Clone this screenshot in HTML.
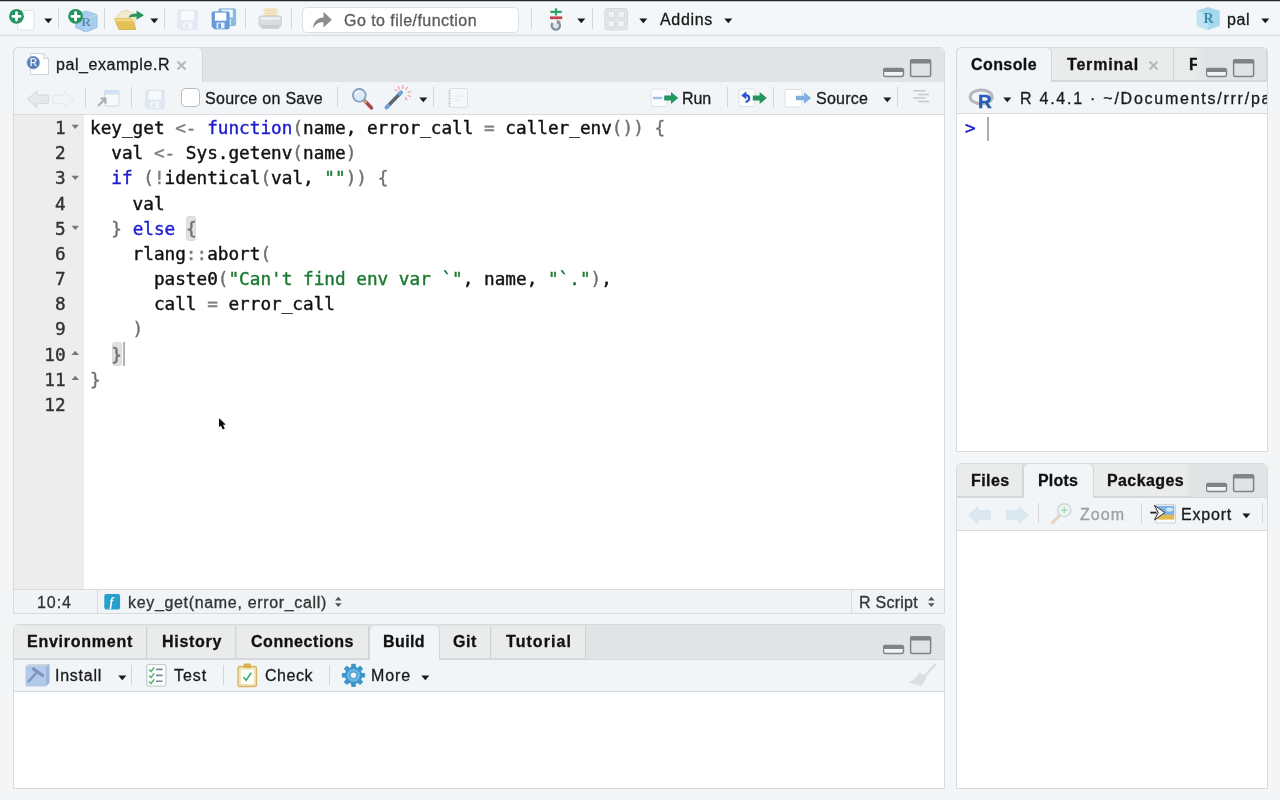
<!DOCTYPE html>
<html><head><meta charset="utf-8"><title>RStudio</title>
<style>
*{box-sizing:border-box;margin:0;padding:0}
html,body{width:1280px;height:800px;overflow:hidden;background:#f4f5f7}
body{filter:blur(0.4px);background:#f4f5f7;font-family:"Liberation Sans",sans-serif;font-size:16px;color:#1a1a1a;position:relative}
.abs{position:absolute}
svg{display:block}
.t{-webkit-text-stroke:0.3px;position:absolute;white-space:pre;line-height:20px}
.sep{position:absolute;width:1px;background:#d3d6d8}
.code{-webkit-text-stroke:0.42px;font-family:"DejaVu Sans Mono","Liberation Mono",monospace;font-size:17.69px;white-space:pre;position:absolute;line-height:25.18px;height:25.18px}
</style></head><body>
<div class="abs" style="left:0px;top:0px;width:1280px;height:35px;background:#f4f7f9;"></div>
<div class="abs" style="left:0px;top:34px;width:1280px;height:1px;background:#e6e8ea;"></div>
<div class="abs" style="left:0px;top:35px;width:1280px;height:1px;background:#dfe2e3;"></div>
<div class="abs" style="left:0px;top:36px;width:1280px;height:1px;background:#eceef0;"></div>
<div class="abs" style="left:0px;top:0px;width:1280px;height:1px;background:#23262a;"></div>
<div class="abs" style="left:0px;top:1px;width:1280px;height:1px;background:rgba(35,38,42,0.25);"></div>
<svg class="abs" style="left:8px;top:6px" width="30" height="27" viewBox="8 6 30 27"><rect x="17.5" y="10.5" width="16.5" height="19.5" rx="1" fill="#fdfeff" stroke="#dfe3e6" stroke-width="1"/><circle cx="16.5" cy="16.3" r="7.4" fill="#24955c"/><path d="M16.5 12.6 V20 M12.8 16.3 H20.2" stroke="#fff" stroke-width="2.8" stroke-linecap="round"/></svg>
<svg class="abs" style="left:44px;top:17.9px" width="9" height="6" viewBox="0 0 9 6"><path d="M0.3 0.6 L8.3 0.6 L4.3 5.2 Z" fill="#1a1a1a"/></svg>
<div class="sep" style="left:58px;top:8px;height:21px"></div>
<svg class="abs" style="left:66px;top:5px" width="34" height="30" viewBox="66 5 34 30"><path d="M86 11 L97 14.5 L97 27.5 L86 32 L75.5 27.5 L75.5 14.5 Z" fill="#a9cdec" stroke="#8fbbe2" stroke-width="0.8"/><path d="M86 19 L97 14.5 M86 19 L75.5 14.5 M86 19 V32" stroke="#c4def3" stroke-width="0.8" fill="none"/><text x="81.5" y="25.5" font-family="Liberation Serif,serif" font-weight="bold" font-size="13" fill="#5b8db4">R</text><circle cx="75.6" cy="16.3" r="7.4" fill="#24955c"/><path d="M75.6 12.6 V20 M71.9 16.3 H79.3" stroke="#fff" stroke-width="2.8" stroke-linecap="round"/></svg>
<div class="sep" style="left:104px;top:8px;height:21px"></div>
<svg class="abs" style="left:112px;top:6px" width="34" height="27" viewBox="112 6 34 27"><path d="M117 16 L121 11.5 L128 10.5 L131 13 L135 13 L135 26 L117 26 Z" fill="#f4ead0" stroke="#e2cf9a" stroke-width="0.8"/><path d="M114.5 18.5 L131.5 18.5 L136 29.5 L119 29.5 Z" fill="#e3c155" stroke="#d4ae3c" stroke-width="0.8"/><path d="M114.5 18.5 L131.5 18.5 L132.8 21.5 L115.7 21.5 Z" fill="#f0d77f"/><path d="M128.5 17.5 C129.5 14.5 132.5 13.6 136.5 13.8 L136.5 10.6 L144 15.2 L136.5 19.8 L136.5 16.8 C133.5 16.6 131 16.8 128.5 17.5 Z" fill="#24955c"/></svg>
<svg class="abs" style="left:149.5px;top:17.9px" width="9" height="6" viewBox="0 0 9 6"><path d="M0.3 0.6 L8.3 0.6 L4.3 5.2 Z" fill="#1a1a1a"/></svg>
<div class="sep" style="left:164px;top:8px;height:21px"></div>
<svg class="abs" style="left:176px;top:8px" width="24" height="24" viewBox="176 8 24 24"><path d="M177.8 11.399999999999999 Q177.8 10.2 179.0 10.2 L196.20000000000002 10.2 Q197.4 10.2 197.4 11.399999999999999 L197.4 28.6 Q197.4 29.8 196.20000000000002 29.8 L180.3 29.8 L177.8 27.3 Z" fill="#e2eaf3" stroke="#dbe2ea" stroke-width="0.6"/><rect x="181.1" y="11.0" width="12.9" height="9.2" fill="#f8fafc"/><rect x="183.1" y="22.4" width="9.0" height="6.8" fill="#f4f7fa"/><rect x="184.9" y="23.5" width="3.3" height="5.1" fill="#e2eaf3"/></svg>
<svg class="abs" style="left:210px;top:7px" width="28" height="25" viewBox="210 7 28 25"><path d="M218.8 10.0 Q218.8 8.8 220.0 8.8 L234.40000000000003 8.8 Q235.60000000000002 8.8 235.60000000000002 10.0 L235.60000000000002 24.400000000000002 Q235.60000000000002 25.6 234.40000000000003 25.6 L221.3 25.6 L218.8 23.1 Z" fill="#84bde0" stroke="#6aa6d6" stroke-width="0.6"/><rect x="221.7" y="9.6" width="11.1" height="7.9" fill="#f2f8fc"/><rect x="223.3" y="19.2" width="7.7" height="5.8" fill="#dbeaf6"/><rect x="224.8" y="20.2" width="2.9" height="4.4" fill="#84bde0"/><path d="M212 13.0 Q212 11.8 213.2 11.8 L228.0 11.8 Q229.2 11.8 229.2 13.0 L229.2 27.8 Q229.2 29.0 228.0 29.0 L214.5 29.0 L212 26.5 Z" fill="#679cd8" stroke="#5a8fcc" stroke-width="0.6"/><rect x="214.9" y="12.6" width="11.4" height="8.1" fill="#ffffff"/><rect x="216.6" y="22.5" width="7.9" height="5.9" fill="#e9f1fa"/><rect x="218.2" y="23.5" width="2.9" height="4.5" fill="#679cd8"/></svg>
<div class="sep" style="left:245px;top:8px;height:21px"></div>
<svg class="abs" style="left:256px;top:6px" width="28" height="25" viewBox="256 6 28 25"><rect x="263.5" y="8" width="14" height="10" fill="#f5e7c6"/><path d="M265 10.5 H276 M265 13 H276 M265 15.5 H276" stroke="#ecd9ae" stroke-width="1"/><rect x="259" y="16" width="22.5" height="10.5" rx="2.5" fill="#d9dde0" stroke="#c3c8cc" stroke-width="0.8"/><rect x="261" y="17.2" width="18.5" height="2.6" fill="#eceff1"/><rect x="261" y="25" width="18.5" height="3.8" rx="1" fill="#c9ced2"/></svg>
<div class="sep" style="left:291px;top:8px;height:21px"></div>
<div class="abs" style="left:301.5px;top:6.5px;width:217.5px;height:26px;background:#fff;border:1.5px solid #dcdfe1;border-radius:4.5px"></div>
<svg class="abs" style="left:311px;top:9px" width="23" height="22" viewBox="311 9 23 22"><path d="M313 28.5 C313.5 21.5 317.5 17.8 323.5 17.6 L323.5 11.8 L331.8 19.8 L323.5 27.6 L323.5 22.2 C319 22 315.5 23.8 313 28.5 Z" fill="#8c8c8c"/></svg>
<span class="t" style="left:344.0px;top:10.7px;color:#5c5c5c;letter-spacing:0.45px;">Go to file/function</span>
<div class="sep" style="left:531px;top:8px;height:21px"></div>
<svg class="abs" style="left:546px;top:5px" width="20" height="28" viewBox="546 5 20 28"><path d="M556 8.2 V15.4 M550.4 11.8 H561.8" stroke="#2aa766" stroke-width="2.2"/><rect x="550" y="16.4" width="12.2" height="2.8" fill="#c9414a"/><circle cx="555.7" cy="25.7" r="3.4" fill="#dbe8f4"/><path d="M558.6 22.5 A4.1 4.1 0 1 1 552.6 23" fill="none" stroke="#858c92" stroke-width="2.3"/><path d="M556.6 19.6 L561 21.8 L557.2 24.6 Z" fill="#8d9499"/></svg>
<svg class="abs" style="left:577.3px;top:17.9px" width="9" height="6" viewBox="0 0 9 6"><path d="M0.3 0.6 L8.3 0.6 L4.3 5.2 Z" fill="#1a1a1a"/></svg>
<div class="sep" style="left:592px;top:8px;height:21px"></div>
<svg class="abs" style="left:603px;top:7px" width="27" height="25" viewBox="603 7 27 25"><rect x="605" y="8.6" width="22.4" height="21.2" rx="2.5" fill="#e4e7e9" stroke="#d3d7da" stroke-width="1"/><rect x="608" y="11.2" width="6.6" height="6.6" rx="1" fill="#f1f3f5" stroke="#d0d4d7" stroke-width="0.9"/><rect x="617.8" y="11.2" width="6.6" height="6.6" rx="1" fill="#f1f3f5" stroke="#d0d4d7" stroke-width="0.9"/><rect x="608" y="20.6" width="6.6" height="6.6" rx="1" fill="#f1f3f5" stroke="#d0d4d7" stroke-width="0.9"/><rect x="617.8" y="20.6" width="6.6" height="6.6" rx="1" fill="#f1f3f5" stroke="#d0d4d7" stroke-width="0.9"/></svg>
<svg class="abs" style="left:638.5px;top:17.9px" width="9" height="6" viewBox="0 0 9 6"><path d="M0.3 0.6 L8.3 0.6 L4.3 5.2 Z" fill="#1a1a1a"/></svg>
<span class="t" style="left:660.0px;top:10.0px;color:#1a1a1a;letter-spacing:0.68px;">Addins</span>
<svg class="abs" style="left:724px;top:17.9px" width="9" height="6" viewBox="0 0 9 6"><path d="M0.3 0.6 L8.3 0.6 L4.3 5.2 Z" fill="#1a1a1a"/></svg>
<svg class="abs" style="left:1195px;top:6px" width="27" height="26" viewBox="1195 6 27 26"><path d="M1208 7.6 L1219.3 11 L1219.3 25.5 L1208 29.7 L1197 25.5 L1197 11 Z" fill="#a6d8ee" stroke="#9bd0ea" stroke-width="0.6"/><path d="M1197 11 L1208 14.8 L1208 29.7 L1197 25.5 Z" fill="#c2e3f4"/><text x="1203.6" y="23" font-family="Liberation Serif,serif" font-weight="bold" font-size="14" fill="#3a8ea9">R</text></svg>
<span class="t" style="left:1227.0px;top:10.0px;color:#1a1a1a;letter-spacing:0.55px;">pal</span>
<svg class="abs" style="left:1260.7px;top:17.9px" width="9" height="6" viewBox="0 0 9 6"><path d="M0.3 0.6 L8.3 0.6 L4.3 5.2 Z" fill="#1a1a1a"/></svg>
<div class="abs" style="left:13px;top:47px;width:932px;height:567px;background:#fff;border:1px solid #d8dbdd;border-radius:5px 5px 0 0"></div>
<div class="abs" style="left:14px;top:48px;width:930px;height:34px;background:#e1e4e5;border-radius:5px 5px 0 0"></div>
<div class="abs" style="left:14px;top:48px;width:188px;height:35px;background:#f2f5f8;border-radius:5px 5px 0 0;box-shadow:1px 0 0 #d4d8da,-1px 0 0 #d4d8da"></div>
<div class="abs" style="left:14px;top:82px;width:930px;height:32px;background:#f2f5f8;"></div>
<div class="abs" style="left:14px;top:114px;width:930px;height:1px;background:#d9dcde;"></div>
<svg class="abs" style="left:26px;top:51px" width="25" height="26" viewBox="26 51 25 26"><path d="M30.5 53.5 L43.5 53.5 L48.5 58.5 L48.5 74.5 L30.5 74.5 Z" fill="#fff" stroke="#cfd3d6" stroke-width="1"/><path d="M43.5 53.5 L43.5 58.5 L48.5 58.5" fill="#f0f2f3" stroke="#cfd3d6" stroke-width="0.9"/><circle cx="33.3" cy="62.6" r="6.3" fill="#557cb6" stroke="#86a3d0" stroke-width="0.8"/><text x="29.8" y="66.2" font-family="Liberation Sans,sans-serif" font-weight="bold" font-size="10" fill="#dde6f3">R</text></svg>
<span class="t" style="left:56.0px;top:55.1px;color:#1a1a1a;letter-spacing:0.56px;">pal_example.R</span>
<svg class="abs" style="left:176px;top:60px" width="11" height="11" viewBox="0 0 11 11"><path d="M1.5 1.5 L9.5 9.5 M9.5 1.5 L1.5 9.5" stroke="#b4b9bc" stroke-width="2.2" fill="none"/></svg>
<svg class="abs" style="left:883px;top:58.6px" width="50" height="19" viewBox="0 0 50 19"><rect x="0.5" y="9.5" width="20" height="8" rx="2" fill="#f2f3f4" stroke="#7d8386" stroke-width="1.4"/><rect x="0.5" y="9" width="20" height="4" rx="1.5" fill="#7d8386"/><rect x="27.6" y="1" width="20" height="16.4" rx="1.5" fill="#e0e3e4" stroke="#7d8386" stroke-width="1.5"/><rect x="27" y="0.3" width="21.2" height="4.2" rx="1.5" fill="#7d8386"/></svg>
<svg class="abs" style="left:26px;top:88px" width="24" height="22" viewBox="26 88 24 22"><path d="M27.5 99.3 L37 90.8 L37 95 L48.3 95 L48.3 103.6 L37 103.6 L37 107.8 Z" fill="#e6e8ea" stroke="#d4d7d9" stroke-width="1"/></svg>
<svg class="abs" style="left:51px;top:88px" width="24" height="22" viewBox="51 88 24 22"><path d="M73.6 99.3 L64.2 90.8 L64.2 95 L53 95 L53 103.6 L64.2 103.6 L64.2 107.8 Z" fill="#f1f3f5" stroke="#e4e7e9" stroke-width="1"/></svg>
<div class="sep" style="left:85px;top:87px;height:20px"></div>
<svg class="abs" style="left:96px;top:88px" width="25" height="22" viewBox="96 88 25 22"><rect x="104.5" y="90.5" width="14.5" height="15.5" rx="1.5" fill="#f6f8fa" stroke="#d2d6d9" stroke-width="1"/><rect x="104.5" y="90.5" width="14.5" height="4" rx="1.5" fill="#cfe1f3"/><path d="M98 106 L104.5 99.5 M100.5 98.5 L105.5 98.5 L105.5 103.5" stroke="#a9adb0" stroke-width="2" fill="none"/></svg>
<div class="sep" style="left:131px;top:87px;height:20px"></div>
<svg class="abs" style="left:144px;top:88px" width="22" height="22" viewBox="144 88 22 22"><path d="M145.6 91.4 Q145.6 90.2 146.79999999999998 90.2 L163.0 90.2 Q164.2 90.2 164.2 91.4 L164.2 107.60000000000001 Q164.2 108.80000000000001 163.0 108.80000000000001 L148.1 108.80000000000001 L145.6 106.30000000000001 Z" fill="#dfe8f2" stroke="#d5dde6" stroke-width="0.6"/><rect x="148.8" y="91.0" width="12.3" height="8.7" fill="#f7f9fb"/><rect x="150.6" y="101.7" width="8.6" height="6.5" fill="#f4f7fa"/><rect x="152.3" y="102.8" width="3.2" height="4.8" fill="#dfe8f2"/></svg>
<div class="abs" style="left:181px;top:88px;width:19px;height:19px;background:#fff;border:1.7px solid #b9bcbe;border-radius:4.5px"></div>
<span class="t" style="left:205.0px;top:88.9px;color:#1a1a1a;letter-spacing:0.30px;">Source on Save</span>
<div class="sep" style="left:337px;top:87px;height:20px"></div>
<svg class="abs" style="left:350px;top:86px" width="24" height="25" viewBox="350 86 24 25"><path d="M365 101 L371.5 108" stroke="#a8474a" stroke-width="3.4" stroke-linecap="round"/><path d="M363.5 99.5 L366.5 102.8" stroke="#c9a464" stroke-width="3"/><circle cx="359.3" cy="95.3" r="6.4" fill="#dcebf8" stroke="#7d9cc0" stroke-width="1.6"/><path d="M355.5 94 A4.2 4.2 0 0 1 359 91.3" stroke="#fff" stroke-width="1.4" fill="none"/></svg>
<svg class="abs" style="left:383px;top:84px" width="31" height="27" viewBox="383 84 31 27"><path d="M386.5 107.5 L401 92.5" stroke="#5c6770" stroke-width="3.6" stroke-linecap="round"/><path d="M386.5 107.5 L388.2 105.7" stroke="#6aa6e0" stroke-width="3.6" stroke-linecap="round"/><path d="M399.6 93.9 L401 92.5" stroke="#6aa6e0" stroke-width="3.6" stroke-linecap="round"/><path d="M403 85.5 L402.5 89 M398 86.5 L399.5 89.5 M394.5 89.5 L397.5 91 M407.5 87 L405.5 90 M411 91.5 L407.5 92.5 M411 96.5 L407.5 95.5 M407 100 L405 97.5" stroke="#ee9a98" stroke-width="1.3" fill="none"/></svg>
<svg class="abs" style="left:419.4px;top:97.3px" width="9" height="6" viewBox="0 0 9 6"><path d="M0.3 0.6 L8.3 0.6 L4.3 5.2 Z" fill="#1a1a1a"/></svg>
<div class="sep" style="left:433px;top:87px;height:20px"></div>
<svg class="abs" style="left:446px;top:87px" width="24" height="23" viewBox="446 87 24 23"><rect x="449.5" y="88.5" width="18" height="19" rx="2" fill="#f6f7f8" stroke="#dcdfe1" stroke-width="1"/><path d="M448.3 91 H451 M448.3 93.5 H451 M448.3 96 H451 M448.3 98.5 H451 M448.3 101 H451 M448.3 103.5 H451 M448.3 106 H451" stroke="#c9cdd0" stroke-width="1"/><path d="M455 96 H464 M455 100 H461" stroke="#e4e9f0" stroke-width="1"/></svg>
<svg class="abs" style="left:649px;top:87px" width="31" height="22" viewBox="649 87 31 22"><rect x="651" y="89" width="16" height="17.5" rx="2" fill="#fbfcfd" stroke="#dfe2e4" stroke-width="1"/><rect x="653" y="96.8" width="9.5" height="2.4" fill="#9cc3ee"/><path d="M664.2 95.6 L671 95.6 L671 92 L678.2 98 L671 104 L671 100.4 L664.2 100.4 Z" fill="#24955c"/></svg>
<span class="t" style="left:682.0px;top:88.9px;color:#1a1a1a;letter-spacing:-0.12px;">Run</span>
<div class="sep" style="left:727px;top:87px;height:20px"></div>
<svg class="abs" style="left:737px;top:87px" width="32" height="22" viewBox="737 87 32 22"><rect x="739" y="89" width="16" height="17.5" rx="2" fill="#fbfcfd" stroke="#dfe2e4" stroke-width="1"/><path d="M745.5 102 C750.5 101 750.5 95 745 95.2" stroke="#2f55d4" stroke-width="2.2" fill="none"/><path d="M746.3 91.3 L741.2 95.4 L746.3 99.2 Z" fill="#2f55d4"/><path d="M752.8 95.6 L759.6 95.6 L759.6 92 L766.8 98 L759.6 104 L759.6 100.4 L752.8 100.4 Z" fill="#24955c"/></svg>
<div class="sep" style="left:773px;top:87px;height:20px"></div>
<svg class="abs" style="left:783px;top:87px" width="30" height="22" viewBox="783 87 30 22"><rect x="785" y="89.5" width="17" height="17.5" rx="1.5" fill="#ffffff" stroke="#dcdfe1" stroke-width="1"/><path d="M796 95.8 L804 95.8 L804 92.2 L811.2 98 L804 103.8 L804 100.2 L796 100.2 Z" fill="#7fb0df"/></svg>
<span class="t" style="left:816.0px;top:88.9px;color:#1a1a1a;letter-spacing:0.22px;">Source</span>
<svg class="abs" style="left:882.6px;top:97.2px" width="9" height="6" viewBox="0 0 9 6"><path d="M0.3 0.6 L8.3 0.6 L4.3 5.2 Z" fill="#1a1a1a"/></svg>
<div class="sep" style="left:897px;top:87px;height:20px"></div>
<svg class="abs" style="left:910px;top:88px" width="21" height="17" viewBox="910 88 21 17"><path d="M913 90.8 H925.5 M918 94.4 H929 M913 98 H925.5 M918 101.6 H929" stroke="#c5c9cc" stroke-width="1.5"/></svg>
<div class="abs" style="left:14px;top:115px;width:70px;height:474px;background:#ededed;"></div>
<div class="abs" style="left:186.2px;top:216.2px;width:10.1px;height:24.4px;background:#e1e1e1;border:1px solid #dadada;border-radius:2.5px"></div>
<div class="abs" style="left:111.6px;top:342.1px;width:10.1px;height:24.4px;background:#e1e1e1;border:1px solid #dadada;border-radius:2.5px"></div>
<div class="code" style="left:14px;width:51.6px;top:116.00px;text-align:right;color:#333">1</div>
<svg class="abs" style="left:71px;top:124.3px" width="9" height="6" viewBox="0 0 9 6"><path d="M0.5 0.8 L8 0.8 L4.25 5 Z" fill="#777"/></svg>
<div class="code" style="left:90.0px;top:116.00px;color:#111">key_get <span style="color:#7c8084">&lt;-</span> <span style="color:#1c1cd0">function</span><span style="color:#6e726f">(</span>name, error_call <span style="color:#7c8084">=</span> caller_env<span style="color:#6e726f">())</span> <span style="color:#6e726f">{</span></div>
<div class="code" style="left:14px;width:51.6px;top:141.18px;text-align:right;color:#333">2</div>
<div class="code" style="left:90.0px;top:141.18px;color:#111">  val <span style="color:#7c8084">&lt;-</span> Sys.getenv<span style="color:#6e726f">(</span>name<span style="color:#6e726f">)</span></div>
<div class="code" style="left:14px;width:51.6px;top:166.36px;text-align:right;color:#333">3</div>
<svg class="abs" style="left:71px;top:174.7px" width="9" height="6" viewBox="0 0 9 6"><path d="M0.5 0.8 L8 0.8 L4.25 5 Z" fill="#777"/></svg>
<div class="code" style="left:90.0px;top:166.36px;color:#111">  <span style="color:#1c1cd0">if</span> <span style="color:#6e726f">(</span><span style="color:#7c8084">!</span>identical<span style="color:#6e726f">(</span>val, <span style="color:#1a7a31">&quot;&quot;</span><span style="color:#6e726f">))</span> <span style="color:#6e726f">{</span></div>
<div class="code" style="left:14px;width:51.6px;top:191.54px;text-align:right;color:#333">4</div>
<div class="code" style="left:90.0px;top:191.54px;color:#111">    val</div>
<div class="code" style="left:14px;width:51.6px;top:216.72px;text-align:right;color:#333">5</div>
<svg class="abs" style="left:71px;top:225.0px" width="9" height="6" viewBox="0 0 9 6"><path d="M0.5 0.8 L8 0.8 L4.25 5 Z" fill="#777"/></svg>
<div class="code" style="left:90.0px;top:216.72px;color:#111">  <span style="color:#6e726f">}</span> <span style="color:#1c1cd0">else</span> <span style="color:#6e726f">{</span></div>
<div class="code" style="left:14px;width:51.6px;top:241.90px;text-align:right;color:#333">6</div>
<div class="code" style="left:90.0px;top:241.90px;color:#111">    rlang<span style="color:#7c8084">::</span>abort<span style="color:#6e726f">(</span></div>
<div class="code" style="left:14px;width:51.6px;top:267.08px;text-align:right;color:#333">7</div>
<div class="code" style="left:90.0px;top:267.08px;color:#111">      paste0<span style="color:#6e726f">(</span><span style="color:#1a7a31">&quot;Can&#x27;t find env var `&quot;</span>, name, <span style="color:#1a7a31">&quot;`.&quot;</span><span style="color:#6e726f">)</span>,</div>
<div class="code" style="left:14px;width:51.6px;top:292.26px;text-align:right;color:#333">8</div>
<div class="code" style="left:90.0px;top:292.26px;color:#111">      call <span style="color:#7c8084">=</span> error_call</div>
<div class="code" style="left:14px;width:51.6px;top:317.44px;text-align:right;color:#333">9</div>
<div class="code" style="left:90.0px;top:317.44px;color:#111">    <span style="color:#6e726f">)</span></div>
<div class="code" style="left:14px;width:51.6px;top:342.62px;text-align:right;color:#333">10</div>
<svg class="abs" style="left:71px;top:349.6px" width="9" height="6" viewBox="0 0 9 6"><path d="M0.5 5 L8 5 L4.25 0.8 Z" fill="#777"/></svg>
<div class="code" style="left:90.0px;top:342.62px;color:#111">  <span style="color:#6e726f">}</span></div>
<div class="code" style="left:14px;width:51.6px;top:367.80px;text-align:right;color:#333">11</div>
<svg class="abs" style="left:71px;top:374.8px" width="9" height="6" viewBox="0 0 9 6"><path d="M0.5 5 L8 5 L4.25 0.8 Z" fill="#777"/></svg>
<div class="code" style="left:90.0px;top:367.80px;color:#111"><span style="color:#6e726f">}</span></div>
<div class="code" style="left:14px;width:51.6px;top:392.98px;text-align:right;color:#333">12</div>
<div class="abs" style="left:123px;top:342px;width:2px;height:24px;background:#b2b2b2;"></div>
<svg class="abs" style="left:216px;top:416px" width="12" height="16" viewBox="216 416 12 16"><path d="M219.2 418.6 L219.2 426.8 L221 425.2 L222.9 429.2 L224.5 428.5 L222.7 424.6 L225.4 424.4 Z" fill="#0a0a0a" stroke="rgba(120,120,120,0.25)" stroke-width="1.2"/><path d="M219.2 418.6 L219.2 426.8 L221 425.2 L222.9 429.2 L224.5 428.5 L222.7 424.6 L225.4 424.4 Z" fill="#0a0a0a"/></svg>
<div class="abs" style="left:14px;top:589px;width:930px;height:1px;background:#d9dcde;"></div>
<div class="abs" style="left:14px;top:590px;width:930px;height:23px;background:#f0f4f7;"></div>
<div class="abs" style="left:97px;top:590px;width:1px;height:23px;background:#d9dcde;"></div>
<div class="abs" style="left:851px;top:590px;width:1px;height:23px;background:#d9dcde;"></div>
<span class="t" style="left:37.0px;top:592.5px;color:#333;letter-spacing:0.96px;">10:4</span>
<svg class="abs" style="left:104px;top:593px" width="18" height="18" viewBox="104 593 18 18"><rect x="104.3" y="594" width="15.8" height="15.5" rx="2" fill="#27a0cc"/><text x="109.6" y="606.2" font-family="Liberation Serif,serif" font-style="italic" font-weight="bold" font-size="12" fill="#fff">f</text></svg>
<span class="t" style="left:128.0px;top:592.5px;color:#333;letter-spacing:0.67px;">key_get(name, error_call)</span>
<svg class="abs" style="left:334px;top:596px" width="9" height="12" viewBox="0 0 9 12"><path d="M1 4.6 L7.6 4.6 L4.3 0.8 Z M1 7.2 L7.6 7.2 L4.3 11 Z" fill="#555"/></svg>
<span class="t" style="left:859.0px;top:592.5px;color:#333;letter-spacing:0.26px;">R Script</span>
<svg class="abs" style="left:927px;top:596px" width="9" height="12" viewBox="0 0 9 12"><path d="M1 4.6 L7.6 4.6 L4.3 0.8 Z M1 7.2 L7.6 7.2 L4.3 11 Z" fill="#555"/></svg>
<div class="abs" style="left:13px;top:624px;width:932px;height:165px;background:#fff;border:1px solid #d8dbdd;border-radius:5px 5px 0 0"></div>
<div class="abs" style="left:14px;top:625px;width:930px;height:35px;background:#e1e4e5;border-radius:5px 5px 0 0"></div>
<div class="abs" style="left:14px;top:659px;width:930px;height:1px;background:#d4d8da;"></div>
<div class="abs" style="left:14px;top:626px;width:133px;height:33px;background:#eaecec;border-right:1px solid #d0d4d6;border-bottom:1px solid #d4d8da"></div>
<div class="abs" style="left:148px;top:626px;width:88px;height:33px;background:#eaecec;border-right:1px solid #d0d4d6;border-bottom:1px solid #d4d8da"></div>
<div class="abs" style="left:237px;top:626px;width:132px;height:33px;background:#eaecec;border-right:1px solid #d0d4d6;border-bottom:1px solid #d4d8da"></div>
<div class="abs" style="left:370px;top:626px;width:69px;height:35px;background:#f2f5f8;border-radius:5px 5px 0 0;box-shadow:1px 0 0 #d4d8da,-1px 0 0 #d4d8da"></div>
<div class="abs" style="left:440px;top:626px;width:51px;height:33px;background:#eaecec;border-right:1px solid #d0d4d6;border-bottom:1px solid #d4d8da"></div>
<div class="abs" style="left:492px;top:626px;width:94px;height:33px;background:#eaecec;border-right:1px solid #d0d4d6;border-bottom:1px solid #d4d8da"></div>
<div class="abs" style="left:14px;top:660px;width:930px;height:31px;background:#f2f5f8;"></div>
<div class="abs" style="left:14px;top:691px;width:930px;height:1px;background:#d9dcde;"></div>
<span class="t" style="left:27.0px;top:631.5px;font-weight:bold;color:#111;letter-spacing:0.75px;">Environment</span>
<span class="t" style="left:162.0px;top:631.5px;font-weight:bold;color:#111;letter-spacing:0.70px;">History</span>
<span class="t" style="left:251.0px;top:631.5px;font-weight:bold;color:#111;letter-spacing:0.56px;">Connections</span>
<span class="t" style="left:383.0px;top:631.5px;font-weight:bold;color:#111;letter-spacing:0.40px;">Build</span>
<span class="t" style="left:453.0px;top:631.5px;font-weight:bold;color:#111;letter-spacing:0.59px;">Git</span>
<span class="t" style="left:506.0px;top:631.5px;font-weight:bold;color:#111;letter-spacing:1.06px;">Tutorial</span>
<svg class="abs" style="left:883px;top:636px" width="50" height="19" viewBox="0 0 50 19"><rect x="0.5" y="9.5" width="20" height="8" rx="2" fill="#f2f3f4" stroke="#7d8386" stroke-width="1.4"/><rect x="0.5" y="9" width="20" height="4" rx="1.5" fill="#7d8386"/><rect x="27.6" y="1" width="20" height="16.4" rx="1.5" fill="#e0e3e4" stroke="#7d8386" stroke-width="1.5"/><rect x="27" y="0.3" width="21.2" height="4.2" rx="1.5" fill="#7d8386"/></svg>
<svg class="abs" style="left:24px;top:663px" width="27" height="25" viewBox="24 663 27 25"><rect x="25.5" y="666" width="20" height="20.5" fill="#b3c9ea"/><path d="M25.5 666 L28.5 664 L49.5 664 L45.5 666 Z" fill="#ccd4db"/><path d="M45.5 666 L49.5 664 L49.5 683 L45.5 686.5 Z" fill="#9cb5d8"/><path d="M28.5 681.5 L37.5 671.5" stroke="#7b95bd" stroke-width="2.4" stroke-linecap="round"/><path d="M33.5 669 L42.5 675.5" stroke="#7b95bd" stroke-width="3.2" stroke-linecap="round"/></svg>
<span class="t" style="left:55.0px;top:666.0px;color:#1a1a1a;letter-spacing:0.74px;">Install</span>
<svg class="abs" style="left:117.6px;top:674.6px" width="9" height="6" viewBox="0 0 9 6"><path d="M0.3 0.6 L8.3 0.6 L4.3 5.2 Z" fill="#1a1a1a"/></svg>
<div class="sep" style="left:131px;top:665px;height:20px"></div>
<svg class="abs" style="left:145px;top:663px" width="23" height="25" viewBox="145 663 23 25"><rect x="146.7" y="664.7" width="19.2" height="21.4" rx="1.8" fill="#fdfefe" stroke="#c9ced2" stroke-width="1.3"/><path d="M156 669.4 H162.6 M156 675.4 H162.6 M156 681.2 H162.6" stroke="#7685a6" stroke-width="1.6"/><path d="M149 669.5 L151 671.5 L154.3 667.3 M149 675.5 L151 677.5 L154.3 673.3 M149 681.5 L151 683.5 L154.3 679.3" stroke="#55b877" stroke-width="1.5" fill="none"/></svg>
<span class="t" style="left:174.0px;top:666.0px;color:#1a1a1a;letter-spacing:0.91px;">Test</span>
<div class="sep" style="left:223px;top:665px;height:20px"></div>
<svg class="abs" style="left:235px;top:662px" width="24" height="27" viewBox="235 662 24 27"><rect x="238" y="666.5" width="18.5" height="20" rx="2" fill="#f2e3b8" stroke="#d6b565" stroke-width="1.3"/><rect x="240.8" y="669.6" width="13" height="14.4" fill="#fdfdfb"/><rect x="243.5" y="663.5" width="7.5" height="4.6" rx="1.2" fill="#d9b04f"/><path d="M243.5 677.2 L246.2 680.2 L251.2 672.8" stroke="#3cab63" stroke-width="1.6" fill="none"/></svg>
<span class="t" style="left:265.0px;top:666.0px;color:#1a1a1a;letter-spacing:0.53px;">Check</span>
<div class="sep" style="left:329px;top:665px;height:20px"></div>
<svg class="abs" style="left:340px;top:662px" width="27" height="27" viewBox="340 662 27 27"><g transform="translate(353.5,675.3)"><rect x="-2.3" y="-11.6" width="4.6" height="5" rx="0.8" transform="rotate(0)" fill="#3d95cc"/><rect x="-2.3" y="-11.6" width="4.6" height="5" rx="0.8" transform="rotate(45)" fill="#3d95cc"/><rect x="-2.3" y="-11.6" width="4.6" height="5" rx="0.8" transform="rotate(90)" fill="#3d95cc"/><rect x="-2.3" y="-11.6" width="4.6" height="5" rx="0.8" transform="rotate(135)" fill="#3d95cc"/><rect x="-2.3" y="-11.6" width="4.6" height="5" rx="0.8" transform="rotate(180)" fill="#3d95cc"/><rect x="-2.3" y="-11.6" width="4.6" height="5" rx="0.8" transform="rotate(225)" fill="#3d95cc"/><rect x="-2.3" y="-11.6" width="4.6" height="5" rx="0.8" transform="rotate(270)" fill="#3d95cc"/><rect x="-2.3" y="-11.6" width="4.6" height="5" rx="0.8" transform="rotate(315)" fill="#3d95cc"/><circle r="8.7" fill="#3d95cc"/><circle r="6.6" fill="#64b4e4"/><circle r="3.3" fill="#eef5fa" stroke="#3583b7" stroke-width="0.8"/></g></svg>
<span class="t" style="left:371.0px;top:666.0px;color:#1a1a1a;letter-spacing:0.89px;">More</span>
<svg class="abs" style="left:421px;top:674.6px" width="9" height="6" viewBox="0 0 9 6"><path d="M0.3 0.6 L8.3 0.6 L4.3 5.2 Z" fill="#1a1a1a"/></svg>
<svg class="abs" style="left:906px;top:661px" width="33" height="28" viewBox="906 661 33 28"><path d="M935.2 664.6 L924.5 676" stroke="#dadee1" stroke-width="2.4" stroke-linecap="round"/><path d="M919.5 672.5 L927 677.5 L921 686 L908.5 682.5 C913 680.5 917 677 919.5 672.5 Z" fill="#dadee1"/></svg>
<div class="abs" style="left:956px;top:47px;width:312px;height:405px;background:#fff;border:1px solid #d8dbdd;border-radius:5px 5px 0 0"></div>
<div class="abs" style="left:957px;top:48px;width:310px;height:34px;background:#e1e4e5;border-radius:5px 5px 0 0"></div>
<div class="abs" style="left:957px;top:81px;width:310px;height:1px;background:#d4d8da;"></div>
<div class="abs" style="left:957px;top:48px;width:94px;height:35px;background:#f2f5f8;border-radius:5px 5px 0 0;box-shadow:1px 0 0 #d4d8da,-1px 0 0 #d4d8da"></div>
<div class="abs" style="left:1052px;top:48px;width:122px;height:33px;background:#eaecec;border-right:1px solid #d0d4d6;border-bottom:1px solid #d4d8da"></div>
<div class="abs" style="left:1174px;top:48px;width:93px;height:33px;background:#eaecec;border-right:1px solid #d0d4d6;border-bottom:1px solid #d4d8da"></div>
<div class="abs" style="left:1190px;top:48px;width:76px;height:33px;background:linear-gradient(90deg,rgba(225,228,229,0) 0,#e1e4e5 16px);border-bottom:1px solid #d4d8da;border-radius:0 5px 0 0"></div>
<span class="t" style="left:971.0px;top:55.0px;font-weight:bold;color:#111;letter-spacing:0.41px;">Console</span>
<span class="t" style="left:1067.0px;top:55.0px;font-weight:bold;color:#111;letter-spacing:0.81px;">Terminal</span>
<svg class="abs" style="left:1148px;top:60px" width="11" height="11" viewBox="0 0 11 11"><path d="M1.5 1.5 L9.5 9.5 M9.5 1.5 L1.5 9.5" stroke="#b4b9bc" stroke-width="2" fill="none"/></svg>
<div class="abs" style="left:1189px;top:52px;width:8px;height:24px;overflow:hidden"><span class="t" style="left:0.0px;top:2.8px;font-weight:bold;color:#111;letter-spacing:0.00px;">Files</span></div>
<svg class="abs" style="left:1206px;top:58.6px" width="50" height="19" viewBox="0 0 50 19"><rect x="0.5" y="9.5" width="20" height="8" rx="2" fill="#f2f3f4" stroke="#7d8386" stroke-width="1.4"/><rect x="0.5" y="9" width="20" height="4" rx="1.5" fill="#7d8386"/><rect x="27.6" y="1" width="20" height="16.4" rx="1.5" fill="#e0e3e4" stroke="#7d8386" stroke-width="1.5"/><rect x="27" y="0.3" width="21.2" height="4.2" rx="1.5" fill="#7d8386"/></svg>
<div class="abs" style="left:957px;top:82px;width:310px;height:31px;background:#f2f5f8;"></div>
<div class="abs" style="left:957px;top:113px;width:310px;height:1px;background:#d9dcde;"></div>
<svg class="abs" style="left:967px;top:86px" width="28" height="25" viewBox="967 86 28 25"><ellipse cx="981.2" cy="96.9" rx="11" ry="7" fill="none" stroke="#b4b7bb" stroke-width="3"/><text x="978" y="108.4" font-family="Liberation Sans,sans-serif" font-weight="bold" font-size="19" fill="#2a5fb8" stroke="#2a5fb8" stroke-width="0.5">R</text></svg>
<svg class="abs" style="left:1003px;top:97.2px" width="9" height="6" viewBox="0 0 9 6"><path d="M0.3 0.6 L8.3 0.6 L4.3 5.2 Z" fill="#1a1a1a"/></svg>
<div class="abs" style="left:1020px;top:84px;width:247px;height:28px;overflow:hidden"><span class="t" style="left:0.0px;top:4.9px;color:#1a1a1a;letter-spacing:1.75px;">R 4.4.1 · ~/Documents/rrr/pal/</span></div>
<div class="code" style="left:965px;top:116px;color:#1c1cd0">&gt;</div>
<div class="abs" style="left:987px;top:117px;width:2px;height:24px;background:#b0b0b0;"></div>
<div class="abs" style="left:956px;top:463px;width:312px;height:326px;background:#fff;border:1px solid #d8dbdd;border-radius:5px 5px 0 0"></div>
<div class="abs" style="left:957px;top:464px;width:310px;height:33px;background:#e1e4e5;border-radius:5px 5px 0 0"></div>
<div class="abs" style="left:957px;top:497px;width:310px;height:1px;background:#d4d8da;"></div>
<div class="abs" style="left:957px;top:464px;width:66px;height:33px;background:#eaecec;border-right:1px solid #d0d4d6;border-bottom:1px solid #d4d8da"></div>
<div class="abs" style="left:1024px;top:464px;width:69px;height:34px;background:#f2f5f8;border-radius:5px 5px 0 0;box-shadow:1px 0 0 #d4d8da,-1px 0 0 #d4d8da"></div>
<div class="abs" style="left:1094px;top:464px;width:98px;height:33px;background:#eaecec;border-right:1px solid #d0d4d6;border-bottom:1px solid #d4d8da"></div>
<div class="abs" style="left:1183px;top:464px;width:12px;height:33px;background:linear-gradient(90deg,rgba(225,228,229,0) 0,#e1e4e5 9px);border-bottom:1px solid #dadddf"></div>
<span class="t" style="left:971.0px;top:470.5px;font-weight:bold;color:#111;letter-spacing:0.41px;">Files</span>
<span class="t" style="left:1038.0px;top:470.5px;font-weight:bold;color:#111;letter-spacing:0.17px;">Plots</span>
<span class="t" style="left:1107.0px;top:470.5px;font-weight:bold;color:#111;letter-spacing:0.39px;">Packages</span>
<svg class="abs" style="left:1206px;top:474px" width="50" height="19" viewBox="0 0 50 19"><rect x="0.5" y="9.5" width="20" height="8" rx="2" fill="#f2f3f4" stroke="#7d8386" stroke-width="1.4"/><rect x="0.5" y="9" width="20" height="4" rx="1.5" fill="#7d8386"/><rect x="27.6" y="1" width="20" height="16.4" rx="1.5" fill="#e0e3e4" stroke="#7d8386" stroke-width="1.5"/><rect x="27" y="0.3" width="21.2" height="4.2" rx="1.5" fill="#7d8386"/></svg>
<div class="abs" style="left:957px;top:498px;width:310px;height:32px;background:#f2f5f8;"></div>
<div class="abs" style="left:957px;top:530px;width:310px;height:1px;background:#d9dcde;"></div>
<svg class="abs" style="left:967px;top:503px" width="26" height="22" viewBox="967 503 26 22"><path d="M968.8 515.2 L978.2 506.8 L978.2 510.8 L990.3 510.8 L990.3 519.6 L978.2 519.6 L978.2 523.6 Z" fill="#dce9f1" stroke="#d3e1ea" stroke-width="0.8"/></svg>
<svg class="abs" style="left:1004px;top:503px" width="26" height="22" viewBox="1004 503 26 22"><path d="M1028.3 515.2 L1018.9 506.8 L1018.9 510.8 L1006.8 510.8 L1006.8 519.6 L1018.9 519.6 L1018.9 523.6 Z" fill="#dce9f1" stroke="#d3e1ea" stroke-width="0.8"/></svg>
<div class="sep" style="left:1038px;top:503px;height:20px"></div>
<svg class="abs" style="left:1049px;top:502px" width="25" height="24" viewBox="1049 502 25 24"><path d="M1059.8 515.2 L1052.6 522.6" stroke="#e3d2c4" stroke-width="3.2" stroke-linecap="round"/><circle cx="1064.3" cy="510.2" r="6.5" fill="#eef5f3" stroke="#cfd8dc" stroke-width="1.5"/><path d="M1064.3 507.1 V513.3 M1061.2 510.2 H1067.4" stroke="#a9d8bd" stroke-width="1.6"/></svg>
<span class="t" style="left:1080.0px;top:505.0px;color:#9da1a4;letter-spacing:1.02px;">Zoom</span>
<div class="sep" style="left:1141px;top:503px;height:20px"></div>
<svg class="abs" style="left:1149px;top:502px" width="30" height="25" viewBox="1149 502 30 25"><rect x="1156" y="504.5" width="19.5" height="18.5" rx="1.2" fill="#fbfcfc" stroke="#c8cdd1" stroke-width="0.9"/><rect x="1157.3" y="505.8" width="17" height="9.2" fill="#7db3e8"/><ellipse cx="1169.5" cy="509.6" rx="3.6" ry="2" fill="#cfe6f7"/><rect x="1157.3" y="514.8" width="17" height="4.8" fill="#e2b950"/><path d="M1150.3 512.6 H1156.5" stroke="#222" stroke-width="1.8"/><path d="M1154.5 505.3 L1164.8 512.6 L1154.5 519.9 L1158.2 512.6 Z" fill="#fff" stroke="#2a2a2a" stroke-width="1" stroke-linejoin="round"/></svg>
<span class="t" style="left:1181.0px;top:505.0px;color:#1a1a1a;letter-spacing:0.79px;">Export</span>
<svg class="abs" style="left:1242px;top:513.4px" width="9" height="6" viewBox="0 0 9 6"><path d="M0.3 0.6 L8.3 0.6 L4.3 5.2 Z" fill="#1a1a1a"/></svg>
<div class="sep" style="left:1262px;top:503px;height:20px"></div>
</body></html>
